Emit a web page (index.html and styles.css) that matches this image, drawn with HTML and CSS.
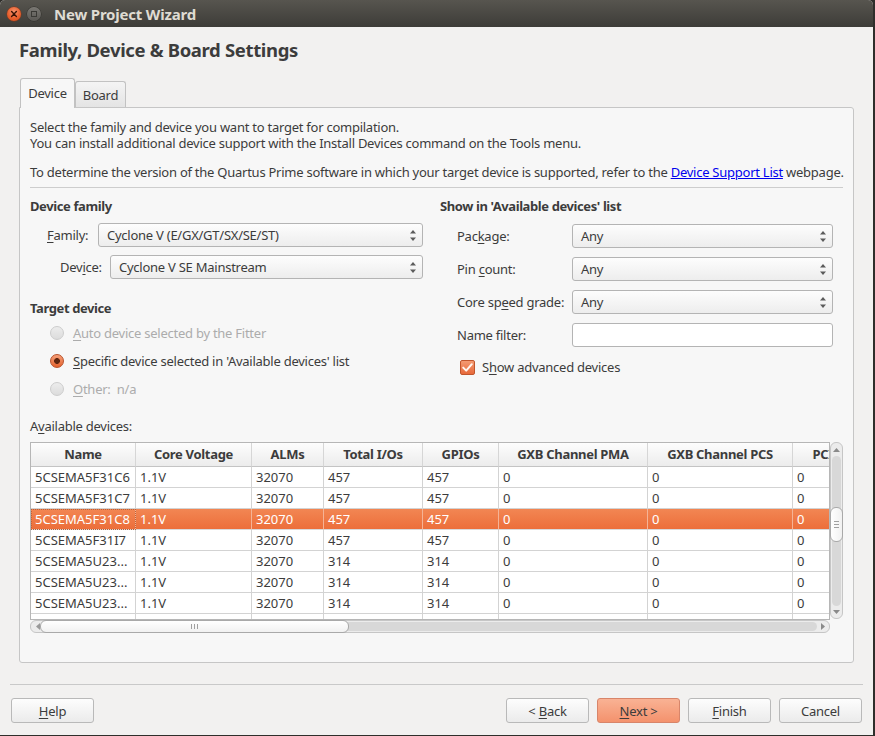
FILE: index.html
```html
<!DOCTYPE html>
<html lang="en">
<head>
<meta charset="utf-8">
<title>New Project Wizard</title>
<link rel="stylesheet" href="styles.css">
</head>
<body>
<div class="window">
  <div class="titlebar">
    <span class="wbtn close"><svg width="14" height="14" viewBox="0 0 14 14"><path d="M4.6 4.6 L9.4 9.4 M9.4 4.6 L4.6 9.4" stroke="#3a1405" stroke-width="1.4" stroke-linecap="round"/></svg></span>
    <span class="wbtn maxi"><svg width="14" height="14" viewBox="0 0 14 14"><rect x="4.5" y="4.5" width="5" height="5" fill="none" stroke="#3a3935" stroke-width="1"/></svg></span>
    <span class="wtitle">New Project Wizard</span>
  </div>
  <div class="content">
    <h1 class="heading">Family, Device &amp; Board Settings</h1>
    <div class="tabs">
      <div class="tab active">Device</div>
      <div class="tab">Board</div>
    </div>
    <div class="panel">
      <div class="intro">
        <div class="line">Select the family and device you want to target for compilation.</div>
        <div class="line">You can install additional device support with the Install Devices command on the Tools menu.</div>
      </div>
      <p class="intro2">To determine the version of the Quartus Prime software in which your target device is supported, refer to the <a class="link" href="#">Device Support List</a> webpage.</p>
      <div class="sep"></div>
      <div class="cols">
        <div class="col">
          <div class="group-title">Device family</div>
          <div class="frow fam">
            <span class="flabel"><u>F</u>amily:</span>
            <div class="combo"><span>Cyclone V (E/GX/GT/SX/SE/ST)</span><svg class="arr" width="6" height="11" viewBox="0 0 6 11"><polygon points="0,3.5 3,0 6,3.5" fill="#5b5b5b"/><polygon points="0,7.5 3,11 6,7.5" fill="#5b5b5b"/></svg></div>
          </div>
          <div class="frow dev">
            <span class="flabel">Dev<u>i</u>ce:</span>
            <div class="combo"><span>Cyclone V SE Mainstream</span><svg class="arr" width="6" height="11" viewBox="0 0 6 11"><polygon points="0,3.5 3,0 6,3.5" fill="#5b5b5b"/><polygon points="0,7.5 3,11 6,7.5" fill="#5b5b5b"/></svg></div>
          </div>
          <div class="group-title target">Target device</div>
          <div class="radio disabled"><span class="rdot"></span><span><u>A</u>uto device selected by the Fitter</span></div>
          <div class="radio"><span class="rdot on"></span><span><u>S</u>pecific device selected in 'Available devices' list</span></div>
          <div class="radio disabled"><span class="rdot"></span><span><u>O</u>ther:&nbsp; n/a</span></div>
        </div>
        <div class="col">
          <div class="group-title">Show in 'Available devices' list</div>
          <div class="srow first">
            <span class="slabel">Pac<u>k</u>age:</span>
            <div class="combo"><span>Any</span><svg class="arr" width="6" height="11" viewBox="0 0 6 11"><polygon points="0,3.5 3,0 6,3.5" fill="#5b5b5b"/><polygon points="0,7.5 3,11 6,7.5" fill="#5b5b5b"/></svg></div>
          </div>
          <div class="srow">
            <span class="slabel">Pin <u>c</u>ount:</span>
            <div class="combo"><span>Any</span><svg class="arr" width="6" height="11" viewBox="0 0 6 11"><polygon points="0,3.5 3,0 6,3.5" fill="#5b5b5b"/><polygon points="0,7.5 3,11 6,7.5" fill="#5b5b5b"/></svg></div>
          </div>
          <div class="srow">
            <span class="slabel">Core sp<u>e</u>ed grade:</span>
            <div class="combo"><span>Any</span><svg class="arr" width="6" height="11" viewBox="0 0 6 11"><polygon points="0,3.5 3,0 6,3.5" fill="#5b5b5b"/><polygon points="0,7.5 3,11 6,7.5" fill="#5b5b5b"/></svg></div>
          </div>
          <div class="srow">
            <span class="slabel">Name filter:</span>
            <div class="textbox"></div>
          </div>
          <div class="check">
            <span class="cbox"><svg width="15" height="15" viewBox="0 0 15 15"><path d="M3.2 7.6 L6.2 10.6 L11.8 4.2" fill="none" stroke="#fff6f0" stroke-width="2" stroke-linecap="round" stroke-linejoin="round"/></svg></span>
            <span>S<u>h</u>ow advanced devices</span>
          </div>
        </div>
      </div>
      <div class="avail-label">A<u>v</u>ailable devices:</div>
      <div class="table-wrap">
        <div class="table-area">
          <div class="viewport">
            <div class="trow thead">
              <div class="c">Name</div><div class="c">Core Voltage</div><div class="c">ALMs</div><div class="c">Total I/Os</div><div class="c">GPIOs</div><div class="c">GXB Channel PMA</div><div class="c">GXB Channel PCS</div><div class="c">PCIe Hard IP Blocks</div>
            </div>
            <div class="trow"><div class="c">5CSEMA5F31C6</div><div class="c">1.1V</div><div class="c">32070</div><div class="c">457</div><div class="c">457</div><div class="c">0</div><div class="c">0</div><div class="c">0</div></div>
            <div class="trow"><div class="c">5CSEMA5F31C7</div><div class="c">1.1V</div><div class="c">32070</div><div class="c">457</div><div class="c">457</div><div class="c">0</div><div class="c">0</div><div class="c">0</div></div>
            <div class="trow sel"><div class="c focus">5CSEMA5F31C8</div><div class="c">1.1V</div><div class="c">32070</div><div class="c">457</div><div class="c">457</div><div class="c">0</div><div class="c">0</div><div class="c">0</div></div>
            <div class="trow"><div class="c">5CSEMA5F31I7</div><div class="c">1.1V</div><div class="c">32070</div><div class="c">457</div><div class="c">457</div><div class="c">0</div><div class="c">0</div><div class="c">0</div></div>
            <div class="trow"><div class="c">5CSEMA5U23...</div><div class="c">1.1V</div><div class="c">32070</div><div class="c">314</div><div class="c">314</div><div class="c">0</div><div class="c">0</div><div class="c">0</div></div>
            <div class="trow"><div class="c">5CSEMA5U23...</div><div class="c">1.1V</div><div class="c">32070</div><div class="c">314</div><div class="c">314</div><div class="c">0</div><div class="c">0</div><div class="c">0</div></div>
            <div class="trow"><div class="c">5CSEMA5U23...</div><div class="c">1.1V</div><div class="c">32070</div><div class="c">314</div><div class="c">314</div><div class="c">0</div><div class="c">0</div><div class="c">0</div></div>
            <div class="trow"><div class="c"></div><div class="c"></div><div class="c"></div><div class="c"></div><div class="c"></div><div class="c"></div><div class="c"></div><div class="c"></div></div>
          </div>
          <div class="vscroll">
            <svg class="sarrow" width="7" height="4" viewBox="0 0 7 4"><polygon points="0,4 3.5,0 7,4" fill="#8a8a8a"/></svg>
            <div class="vgroove">
              <div class="vspace1"></div>
              <div class="vthumb"><svg width="5" height="7" viewBox="0 0 5 7"><path d="M0 0.5H5M0 3.5H5M0 6.5H5" stroke="#a0a0a0" stroke-width="1"/></svg></div>
              <div class="vspace2"></div>
            </div>
            <svg class="sarrow" width="7" height="4" viewBox="0 0 7 4"><polygon points="0,0 3.5,4 7,0" fill="#8a8a8a"/></svg>
          </div>
        </div>
        <div class="hbar">
          <div class="hscroll">
            <svg class="harrow" width="4" height="7" viewBox="0 0 4 7"><polygon points="4,0 0,3.5 4,7" fill="#9a9a9a"/></svg>
            <div class="hgroove">
              <div class="hthumb"><svg width="7" height="5" viewBox="0 0 7 5"><path d="M0.5 0V5M3.5 0V5M6.5 0V5" stroke="#a0a0a0" stroke-width="1"/></svg></div>
            </div>
            <svg class="harrow" width="4" height="7" viewBox="0 0 4 7"><polygon points="0,0 4,3.5 0,7" fill="#8a8a8a"/></svg>
          </div>
          <div class="corner"></div>
        </div>
      </div>
    </div>
    <div class="bottom-sep"></div>
    <div class="buttons">
      <button class="btn"><u>H</u>elp</button>
      <div class="spacer"></div>
      <button class="btn">&lt; <u>B</u>ack</button>
      <button class="btn primary"><u>N</u>ext &gt;</button>
      <button class="btn"><u>F</u>inish</button>
      <button class="btn">Cancel</button>
    </div>
  </div>
</div>
</body>
</html>
```

FILE: styles.css
```css
* { box-sizing: border-box; }
html, body { margin: 0; padding: 0; }
body {
  background: #2f2e2b;
  font-family: "Noto Sans", "Open Sans", sans-serif;
  font-size: 13px;
  line-height: 16px;
  letter-spacing: -0.25px;
  color: #3c3c3c;
  width: 875px;
  height: 736px;
  overflow: hidden;
}
u { text-decoration: underline; text-underline-offset: 2px; }

.window {
  width: 873px;
  height: 735px;
  background: #f2f1f0;
  display: flex;
  flex-direction: column;
  border-top-left-radius: 5px;
  border-top-right-radius: 5px;
  overflow: hidden;
}

.titlebar {
  height: 27px;
  flex: none;
  background: linear-gradient(#57554f, #3d3c38);
  display: flex;
  align-items: center;
  padding-left: 7px;
}
.wbtn {
  width: 14px;
  height: 14px;
  border-radius: 50%;
  display: block;
  margin-right: 6px;
}
.wbtn svg { display: block; }
.close {
  background: radial-gradient(circle at 50% 35%, #f59470 0%, #e9602e 55%, #d14a19 100%);
  box-shadow: 0 0 0 0.5px #8a3415;
}
.maxi {
  background: linear-gradient(#7a7873, #5a5854);
  box-shadow: 0 0 0 0.5px #2e2d2a;
}
.wtitle {
  margin-left: 7px;
  color: #dfdbd2;
  font-weight: bold;
  font-size: 15px;
  letter-spacing: -0.2px;
}

.content {
  flex: 1;
  display: flex;
  flex-direction: column;
}

.heading {
  margin: 13px 0 0 19px;
  font-size: 18.5px;
  line-height: 20px;
  font-weight: bold;
  letter-spacing: -0.35px;
  color: #3c3c3c;
}

.tabs {
  display: flex;
  align-items: flex-end;
  margin: 18px 0 0 20px;
  height: 29px;
  position: relative;
  z-index: 1;
}
.tab {
  height: 26px;
  width: 51px;
  border: 1px solid #c2c2c2;
  border-bottom: none;
  border-radius: 3px 3px 0 0;
  background: linear-gradient(#f4f4f4, #e4e4e4);
  display: flex;
  align-items: center;
  justify-content: center;
  color: #3c3c3c;
}
.tab.active {
  height: 30px;
  width: 55px;
  margin-bottom: -1px;
  background: #f7f7f7;
  padding-bottom: 1px;
}

.panel {
  margin: 0 19px 0 19px;
  background: #f7f7f7;
  border: 1px solid #c6c6c6;
  border-radius: 0 3px 3px 3px;
  padding: 11px 10px 29px 10px;
}
.intro .line { height: 16px; white-space: nowrap; }
.intro2 { margin: 13px 0 0; white-space: nowrap; }
.link { color: #0000ee; text-decoration: underline; }

.sep {
  margin-top: 7px;
  height: 1px;
  background: #cdcdcd;
}

.cols {
  margin-top: 10px;
  display: grid;
  grid-template-columns: 393px 393px;
  column-gap: 17px;
}
.group-title { font-weight: bold; letter-spacing: -0.4px; }
.group-title.target { margin-top: 21px; }

.frow {
  display: flex;
  align-items: center;
  height: 24px;
}
.frow.fam { margin-top: 9px; padding-left: 17px; }
.frow.dev { margin-top: 8px; padding-left: 30px; }
.frow.fam .flabel { width: 51px; }
.frow.dev .flabel { width: 50px; }
.frow .combo { flex: 1; }

.combo {
  height: 24px;
  border: 1px solid #b4b4b4;
  border-radius: 3px;
  background: linear-gradient(#fdfdfd, #ededed);
  display: flex;
  align-items: center;
  padding: 0 6px 0 8px;
  justify-content: space-between;
  color: #3c3c3c;
}
.arr { flex: none; }

.radio {
  display: flex;
  align-items: center;
  height: 28px;
  padding-left: 20px;
}
.group-title.target + .radio { margin-top: 3px; }
.rdot {
  width: 14px;
  height: 14px;
  border-radius: 50%;
  border: 1px solid #cdcdcd;
  background: linear-gradient(#ececec, #dcdcdc);
  margin-right: 9px;
  flex: none;
}
.rdot.on {
  border-color: #b8512a;
  background: radial-gradient(circle, #5e250f 0 2.6px, transparent 3.2px), linear-gradient(#f6a07a, #e4622e);
}
.radio.disabled { color: #acacac; }

.srow {
  display: flex;
  align-items: center;
  height: 24px;
  margin-top: 9px;
  padding-left: 17px;
}
.srow.first { margin-top: 10px; }
.slabel { width: 115px; flex: none; }
.srow .combo, .srow .textbox { width: 261px; }
.textbox {
  height: 24px;
  border: 1px solid #b4b4b4;
  border-radius: 3px;
  background: #ffffff;
}

.check {
  margin-top: 12px;
  display: flex;
  align-items: center;
  height: 16px;
  padding-left: 20px;
}
.cbox {
  width: 15px;
  height: 15px;
  border-radius: 2px;
  border: 1px solid #c0552c;
  background: linear-gradient(#f49a72, #e7693a);
  margin-right: 7px;
  flex: none;
  display: flex;
  align-items: center;
  justify-content: center;
}
.cbox svg { display: block; margin: -1px; }

.avail-label { margin-top: 15px; }

.table-wrap { margin-top: 8px; width: 813px; }
.table-area { display: flex; height: 178px; }
.viewport {
  width: 800px;
  height: 178px;
  border: 1px solid #b6b6b6;
  background: #ffffff;
  overflow: hidden;
}
.trow {
  display: grid;
  grid-template-columns: 105px 116px 72px 99px 76px 149px 145px 160px;
  width: 922px;
  height: 21px;
}
.c {
  border-right: 1px solid #d3d3d3;
  border-bottom: 1px solid #d3d3d3;
  padding: 0 4px;
  white-space: nowrap;
  overflow: hidden;
  line-height: 20px;
  letter-spacing: 0;
  color: #3c3c3c;
}
.thead { height: 24px; }
.thead .c {
  background: linear-gradient(#fdfdfd, #ececec);
  border-bottom-color: #c4c4c4;
  border-right-color: #d6d6d6;
  font-weight: bold;
  letter-spacing: -0.3px;
  text-align: center;
  line-height: 23px;
}
.trow.sel { background: linear-gradient(#f28653, #ec6d39); }
.trow.sel .c {
  color: #ffffff;
  border-right-color: #f5b396;
  border-bottom-color: #d9d9d9;
}
.trow.sel .c.focus { outline: 1px dotted #b9633c; outline-offset: -1px; }

.vscroll {
  width: 13px;
  height: 177px;
  border: 1px solid #c6c6c6;
  border-radius: 6px;
  background: #ececec;
  display: flex;
  flex-direction: column;
  align-items: center;
  padding: 5px 0 4px;
}
.sarrow { flex: none; display: block; }
.vgroove {
  flex: 1;
  width: 9px;
  margin: 4px 0;
  border-radius: 5px;
  background: #d8d8d8;
  display: flex;
  flex-direction: column;
  align-items: center;
}
.vspace1 { height: 51px; flex: none; }
.vthumb {
  width: 13px;
  height: 35px;
  flex: none;
  background: linear-gradient(90deg, #ffffff, #f1f1f1);
  border: 1px solid #a9a9a9;
  border-radius: 6px;
  display: flex;
  align-items: center;
  justify-content: center;
}
.vthumb svg { display: block; }
.vspace2 { flex: 1; }

.hbar { display: flex; height: 13px; }
.hscroll {
  width: 800px;
  height: 13px;
  border: 1px solid #c6c6c6;
  border-radius: 6px;
  background: #ececec;
  display: flex;
  align-items: center;
  padding: 0 4px 0 5px;
}
.harrow { flex: none; display: block; }
.hgroove {
  flex: 1;
  height: 9px;
  margin: 0 4px;
  border-radius: 5px;
  background: #d8d8d8;
  display: flex;
  align-items: center;
}
.hthumb {
  width: 309px;
  height: 13px;
  margin-left: -4px;
  background: linear-gradient(#ffffff, #f1f1f1);
  border: 1px solid #a9a9a9;
  border-radius: 6px;
  display: flex;
  align-items: center;
  justify-content: center;
}
.hthumb svg { display: block; }
.corner { width: 13px; }

.bottom-sep {
  margin: 21px 10px 0 10px;
  height: 1px;
  background: #c9c9c9;
}

.buttons {
  display: flex;
  gap: 8px;
  margin: 13px 11px 0 11px;
}
.spacer { flex: 1; }
.btn {
  width: 83px;
  height: 25px;
  border: 1px solid #b9b9b9;
  border-radius: 3px;
  background: linear-gradient(#fdfdfd, #ebebeb);
  font-family: inherit;
  font-size: 13px;
  letter-spacing: -0.25px;
  color: #3c3c3c;
  padding: 0;
  line-height: 16px;
}
.btn.primary {
  background: linear-gradient(#f9b294, #f4926d);
  border-color: #d8856a;
}
```
